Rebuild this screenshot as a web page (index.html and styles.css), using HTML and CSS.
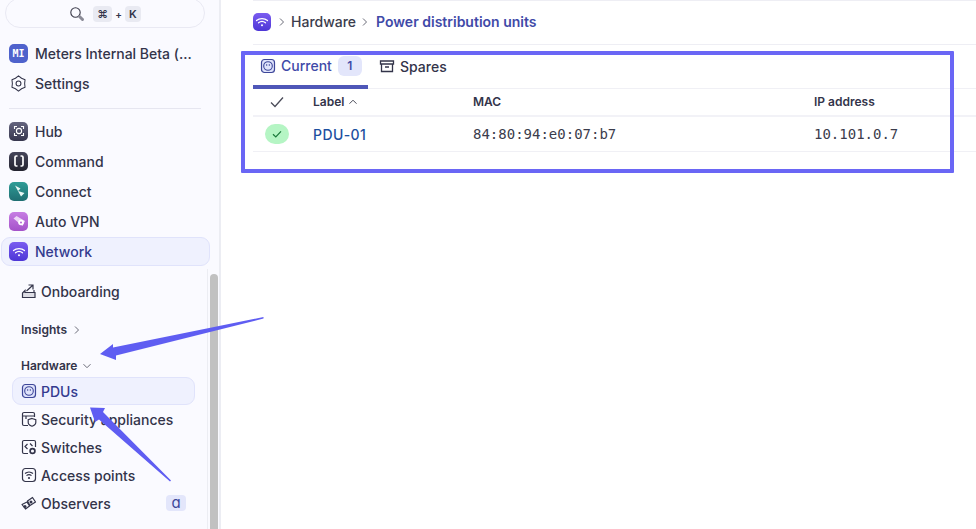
FILE: index.html
```html
<!DOCTYPE html>
<html lang="en">
<head>
    <meta charset="UTF-8">
    <title>Power distribution units</title>
    <link rel="stylesheet" href="styles.css">
</head>
<body>
    <aside class="sidebar">
        <div class="search">
            <svg class="search-icon" viewBox="0 0 16 16" width="16" height="16"><circle cx="6.5" cy="6.5" r="4.7" fill="none" stroke="#3a3a4a" stroke-width="1.1"/><path d="M10.500 10.500l3 3" stroke="#8a8a96" stroke-width="3" stroke-linecap="round"/></svg>
            <span class="key key-cmd">⌘</span><span class="plus">+</span><span class="key">K</span>
        </div>

        <div class="nav-item">
            <span class="app-icon app-mi">MI</span>
            <span>Meters Internal Beta (...</span>
        </div>
        <div class="nav-item">
            <svg class="app-icon" viewBox="0 0 18 18"><path d="M9 1.800L11.900 4l3.300 1.400L14.800 9l.4 3.600-3.300 1.400L9 16.200 6.100 14l-3.300-1.400L3.200 9l-.4-3.600L6.100 4z" fill="none" stroke="#33344a" stroke-width="1" stroke-linejoin="round"/><circle cx="9" cy="9" r="2.300" fill="none" stroke="#33344a" stroke-width="1"/></svg>
            <span>Settings</span>
        </div>
        <div class="divider"></div>
        <div class="nav-item">
            <span class="app-icon app-hub"><svg viewBox="0 0 18 18" width="18" height="18"><circle cx="9" cy="9" r="2.600" fill="none" stroke="#fff" stroke-width="1.100"/><path d="M4.500 7V4.500H7M11 4.500h2.500V7M13.500 11v2.500H11M7 13.500H4.500V11" fill="none" stroke="#fff" stroke-width="1.100"/></svg></span>
            <span>Hub</span>
        </div>
        <div class="nav-item">
            <span class="app-icon app-command"><svg viewBox="0 0 18 18" width="18" height="18"><path d="M7.500 4H6.200C5.400 4 5 4.500 5 5.200v7.600c0 .7.400 1.200 1.200 1.200h1.300M10.500 4h1.300c.8 0 1.200.5 1.200 1.200v7.600c0 .7-.4 1.200-1.200 1.200h-1.300" fill="none" stroke="#fff" stroke-width="1.700"/></svg></span>
            <span>Command</span>
        </div>
        <div class="nav-item">
            <span class="app-icon app-connect"><svg viewBox="0 0 18 18" width="18" height="18"><path d="M5 3.500l5.500 3-2.500 2.500zM8 9l6.500 2-3.500 3.500z" fill="#eaf7f5"/></svg></span>
            <span>Connect</span>
        </div>
        <div class="nav-item">
            <span class="app-icon app-vpn"><svg viewBox="0 0 18 18" width="18" height="18"><path d="M3.500 6.500L6.500 4l8.500 5-2.500 5z" fill="#edd6f7"/><circle cx="11" cy="10.500" r="2.800" fill="#fff"/><circle cx="11" cy="10.500" r="1" fill="#b563d6"/></svg></span>
            <span>Auto VPN</span>
        </div>
        <div class="nav-item nav-active">
            <span class="app-icon app-network"><svg viewBox="0 0 18 18" width="18" height="18"><path d="M3.500 7.500c3-2.600 8-2.600 11 0M5.500 9.800c2-1.600 5-1.600 7 0" fill="none" stroke="#fff" stroke-width="1.200" stroke-linecap="round"/><circle cx="9" cy="12.200" r="1" fill="#fff"/></svg></span>
            <span>Network</span>
        </div>

        <div class="sub-area">
            <div class="sub-list">
                <div class="sub-item onboarding">
                    <svg class="sub-icon" viewBox="0 0 16 16"><path d="M1.500 14.500V10l2.500-2.500v2h10v5z" fill="#dcdce4" stroke="#33344a" stroke-width="1.200"/><path d="M5.500 8L11.500 2.500M7.500 2h4.500v4.500M13 7v2.500" fill="none" stroke="#33344a" stroke-width="1.200"/></svg>
                    <span>Onboarding</span>
                </div>
                <div class="sub-heading insights">
                    <span>Insights</span>
                    <svg viewBox="0 0 10 10" width="10" height="10"><path d="M3 1.500l3.500 3.500L3 8.500" fill="none" stroke="#6a6b78" stroke-width="1"/></svg>
                </div>
                <div class="sub-heading hardware">
                    <span>Hardware</span>
                    <svg viewBox="0 0 10 10" width="10" height="10"><path d="M1.500 3.200L5 6.700l3.500-3.500" fill="none" stroke="#6a6b78" stroke-width="1"/></svg>
                </div>
                <div class="sub-item sub-active">
                    <svg class="sub-icon" viewBox="0 0 16 16"><rect x="1.500" y="1.500" width="13" height="13" rx="3" fill="#dfe3fb" stroke="#3d4699" stroke-width="1.200"/><circle cx="8" cy="8" r="4.300" fill="none" stroke="#3d4699" stroke-width="1.100"/><path d="M6.700 6.200v1.600M9.300 6.200v1.600" stroke="#3d4699" stroke-width="1"/></svg>
                    <span>PDUs</span>
                </div>
                <div class="sub-item">
                    <svg class="sub-icon" viewBox="0 0 16 16"><path d="M7 14.500H3A1.500 1.500 0 0 1 1.500 13V3A1.500 1.500 0 0 1 3 1.500h9A1.500 1.500 0 0 1 13.500 3v3M1.500 5h12M5 5v3" fill="none" stroke="#33344a" stroke-width="1.200"/><path d="M11 7.500l3.800 1.200v2.800c0 1.800-1.700 3-3.800 3.700-2.100-.7-3.800-1.900-3.800-3.700V8.700z" fill="#fafaff" stroke="#33344a" stroke-width="1.200"/></svg>
                    <span>Security appliances</span>
                </div>
                <div class="sub-item">
                    <svg class="sub-icon" viewBox="0 0 16 16"><path d="M7 14.500H3A1.500 1.500 0 0 1 1.500 13V3A1.500 1.500 0 0 1 3 1.500h10A1.500 1.500 0 0 1 14.500 3v5" fill="none" stroke="#33344a" stroke-width="1.200"/><path d="M6.500 5L4 7.500 6.500 10M9 4.500l2.500 2.500" fill="none" stroke="#33344a" stroke-width="1.200"/><circle cx="11.500" cy="12" r="2.400" fill="none" stroke="#33344a" stroke-width="1.700"/></svg>
                    <span>Switches</span>
                </div>
                <div class="sub-item">
                    <svg class="sub-icon" viewBox="0 0 16 16"><rect x="1.500" y="1.500" width="13" height="13" rx="3" fill="none" stroke="#33344a" stroke-width="1.200"/><path d="M4 6.500c2.300-2 5.700-2 8 0M5.500 8.600c1.500-1.200 3.500-1.200 5 0" fill="none" stroke="#33344a" stroke-width="1.200"/><circle cx="8" cy="11" r="1.100" fill="#33344a"/></svg>
                    <span>Access points</span>
                </div>
                <div class="sub-item">
                    <svg class="sub-icon" viewBox="0 0 16 16"><path d="M1 9.500l5-2.500 2.500 4-4 3zM6.500 6l5-3.500 3 4.500-5.500 3.500z" fill="none" stroke="#33344a" stroke-width="1.200" stroke-linejoin="round"/><circle cx="4" cy="11.500" r="1.500" fill="#33344a"/><circle cx="10" cy="7" r="1.500" fill="#33344a"/></svg>
                    <span>Observers</span>
                    <span class="alpha">ɑ</span>
                </div>
            </div>
            <div class="scroll-track"><div class="scroll-thumb"></div></div>
        </div>
    </aside>

    <main class="content">
        <header class="crumbs">
            <span class="crumb-icon"><svg viewBox="0 0 18 18" width="18" height="18"><path d="M3.500 7.500c3-2.600 8-2.600 11 0M5.500 9.800c2-1.600 5-1.600 7 0" fill="none" stroke="#fff" stroke-width="1.200" stroke-linecap="round"/><circle cx="9" cy="12.200" r="1" fill="#fff"/></svg></span>
            <svg viewBox="0 0 10 10" width="10" height="10"><path d="M3 1.500l3.500 3.500L3 8.500" fill="none" stroke="#6a6b78" stroke-width="1"/></svg>
            <span class="crumb">Hardware</span>
            <svg viewBox="0 0 10 10" width="10" height="10"><path d="M3 1.500l3.500 3.500L3 8.500" fill="none" stroke="#6a6b78" stroke-width="1"/></svg>
            <span class="crumb crumb-current">Power distribution units</span>
        </header>

        <nav class="tabs">
            <div class="tab tab-active">
                <svg viewBox="0 0 16 16" width="16" height="16"><rect x="1.500" y="1.500" width="13" height="13" rx="3" fill="#dfe3fb" stroke="#3d4699" stroke-width="1.200"/><circle cx="8" cy="8" r="4.300" fill="none" stroke="#3d4699" stroke-width="1.100"/><path d="M6.700 6.200v1.600M9.300 6.200v1.600" stroke="#3d4699" stroke-width="1"/></svg>
                <span>Current</span>
                <span class="count">1</span>
            </div>
            <div class="tab">
                <svg viewBox="0 0 16 16" width="16" height="16"><path d="M1.500 3h13v3h-13zM2.500 6v7.500h11V6" fill="none" stroke="#33344a" stroke-width="1.300"/><path d="M6 9h4" stroke="#33344a" stroke-width="1.500"/></svg>
                <span>Spares</span>
            </div>
        </nav>

        <div class="table">
            <div class="row row-head">
                <div class="cell-check"><svg viewBox="0 0 16 16" width="16" height="16"><path d="M2 8.500l4 4 8-9" fill="none" stroke="#4a4b58" stroke-width="1.300"/></svg></div>
                <div class="cell-label">Label <svg viewBox="0 0 10 10" width="10" height="10"><path d="M1.500 6.700L5 3.200l3.500 3.500" fill="none" stroke="#4a4b58" stroke-width="1"/></svg></div>
                <div class="cell-mac">MAC</div>
                <div class="cell-ip">IP address</div>
            </div>
            <div class="row row-body">
                <div class="cell-check"><span class="status"><svg viewBox="0 0 12 12" width="12" height="12"><path d="M2 6.300l2.800 2.700L10 3.300" fill="none" stroke="#1a7a3a" stroke-width="1.200"/></svg></span></div>
                <div class="cell-label device-link">PDU-01</div>
                <div class="cell-mac mono">84:80:94:e0:07:b7</div>
                <div class="cell-ip mono">10.101.0.7</div>
            </div>
        </div>
    </main>

    <!-- annotations on top of the screenshot -->
    <div class="callout"></div>
    <svg class="arrows" viewBox="0 0 976 529" width="976" height="529">
        <polygon points="263.500,317 113,347.500 113,344 100,354 116,360 116,355.500 263.500,318.500" fill="#5f5df2"/>
        <polygon points="171,480.500 103,412 105,408 90,407.500 95,422 99,419.500 170,481.500" fill="#5f5df2"/>
    </svg>
</body>
</html>
```

FILE: styles.css
```css
* {
    box-sizing: border-box;
}

body {
    margin: 0;
    width: 976px;
    height: 529px;
    overflow: hidden;
    display: flex;
    position: relative;
    font-family: "Inter", sans-serif;
    font-size: 14px;
    font-weight: 500;
    color: #33344a;
    background: #fff;
}

/* Sidebar */
.sidebar {
    width: 221px;
    height: 529px;
    flex: none;
    display: flex;
    flex-direction: column;
    background: #fafaff;
    border-right: 2px solid #ecedf3;
}

.search {
    height: 30px;
    margin: -2px 14px 10px 5px;
    border: 1px solid #e9e9f3;
    border-radius: 15px;
    display: flex;
    align-items: center;
    justify-content: center;
    gap: 3px;
    padding-top: 2px;
    font-size: 11px;
    font-weight: 600;
}

.search-icon {
    margin-right: 5px;
}

.key {
    height: 16px;
    min-width: 16px;
    padding: 0 3px;
    border-radius: 4px;
    background: #e9eaf2;
    display: flex;
    align-items: center;
    justify-content: center;
}

.key-cmd {
    min-width: 19px;
}

.plus {
    font-size: 10px;
}

.nav-item {
    height: 30px;
    margin-right: 8px;
    padding-left: 9px;
    display: flex;
    align-items: center;
    gap: 7px;
    white-space: nowrap;
}

.app-icon {
    width: 19px;
    height: 19px;
    flex: none;
    border-radius: 5px;
    display: flex;
    align-items: center;
    justify-content: center;
}

.app-mi {
    background: #4f62cc;
    color: #fff;
    font-family: "DejaVu Sans Mono", monospace;
    font-size: 10px;
    font-weight: 700;
}

.app-hub {
    background: linear-gradient(#65657f, #36364e);
}

.app-command {
    background: linear-gradient(#45455a, #23232f);
}

.app-connect {
    background: linear-gradient(#2f9c97, #1f6e72);
}

.app-vpn {
    background: linear-gradient(#c67de3, #a452c9);
}

.app-network {
    background: linear-gradient(#7a5cf0, #4d36d6);
}

.divider {
    height: 1px;
    margin: 10px 18px 7px 9px;
    background: #e6e6f0;
}

.nav-active {
    margin: 1px 9px 0 1px;
    padding-left: 7px;
    height: 29px;
    border: 1px solid #e0e3fb;
    border-radius: 9px;
    background: #eff1fe;
    color: #343b8f;
}

/* Scrolled part of the sidebar */
.sub-area {
    flex: 1;
    min-height: 0;
    display: flex;
    margin-top: 3px;
}

.sub-list {
    flex: 1;
    padding: 8px 12px 0 12px;
}

.sub-item {
    height: 28px;
    padding-left: 9px;
    display: flex;
    align-items: center;
    gap: 4px;
    white-space: nowrap;
}

.sub-icon {
    width: 16px;
    height: 16px;
    flex: none;
}

.sub-heading {
    padding-left: 9px;
    display: flex;
    align-items: center;
    gap: 5px;
    font-size: 12px;
    font-weight: 600;
    line-height: 16px;
}

.insights {
    margin-top: 17px;
}

.hardware {
    margin-top: 20px;
    margin-bottom: 3px;
}

.sub-active {
    border: 1px solid #e0e3fb;
    border-radius: 9px;
    background: #eff1fe;
    color: #343b8f;
    padding-left: 8px;
}

.alpha {
    margin-left: auto;
    margin-right: 9px;
    width: 20px;
    height: 16px;
    border-radius: 4px;
    background: #e3e6fb;
    color: #3d4699;
    font-size: 15px;
    font-weight: 400;
    line-height: 15px;
    text-align: center;
}

.scroll-track {
    width: 12px;
    flex: none;
    border-left: 1px solid #ecedf3;
    padding: 5px 1px 0 2px;
}

.scroll-thumb {
    height: 100%;
    background: #c1c1c1;
    border-radius: 4px 4px 0 0;
}

/* Main */
.content {
    flex: 1;
    min-width: 0;
    padding-left: 32px;
}

.crumbs {
    height: 45px;
    padding-bottom: 2px;
    border-top: 1px solid #eeeef4;
    border-bottom: 1px solid #eeeef4;
    display: flex;
    align-items: center;
    gap: 4px;
}

.crumb-icon {
    width: 18px;
    height: 18px;
    margin-right: 2px;
    border-radius: 5px;
    background: linear-gradient(#7a5cf0, #4d36d6);
}

.crumb {
    color: #3b3c4c;
}

.crumb-current {
    margin-left: 2px;
    color: #3f4aa8;
    font-weight: 600;
}

.tabs {
    height: 44px;
    display: flex;
    border-bottom: 1px solid #f0f0f5;
}

.tab {
    height: 43px;
    padding: 0 0 1px 11px;
    display: flex;
    align-items: center;
    gap: 5px;
}

.tab-active {
    width: 115px;
    height: 44px;
    margin-bottom: -1px;
    padding: 1px 0 0 7px;
    color: #3f4aa8;
    border-bottom: 4px solid #4f57b8;
    border-radius: 8px 8px 0 0;
}

.count {
    margin-left: 1px;
    width: 24px;
    height: 20px;
    border-radius: 6px;
    background: #e3e6fb;
    font-size: 12px;
    font-weight: 600;
    line-height: 20px;
    text-align: center;
}

.row {
    display: flex;
    align-items: center;
}

.row-head {
    height: 28px;
    padding-bottom: 2px;
    border-bottom: 2px solid #f2f2f7;
    font-size: 12px;
    font-weight: 600;
}

.row-body {
    height: 35px;
    border-bottom: 1px solid #f0f0f5;
}

.cell-check {
    width: 60px;
    padding-left: 12px;
    display: flex;
}

.row-head .cell-check {
    padding-left: 16px;
}

.row-head .cell-check svg {
    margin-top: 2px;
}

.cell-label {
    width: 160px;
}

.cell-label svg {
    vertical-align: -1px;
    margin-left: 1px;
}

.cell-mac {
    width: 341px;
}

.status {
    width: 24px;
    height: 20px;
    border-radius: 10px;
    background: #b5f5c4;
    display: flex;
    align-items: center;
    justify-content: center;
}

.device-link {
    color: #1c4fa0;
    letter-spacing: 0.4px;
}

.mono {
    font-family: "DejaVu Sans Mono", monospace;
    font-weight: 400;
    font-size: 14px;
    color: #3b3c4c;
}

/* Annotations */
.callout {
    position: absolute;
    left: 241px;
    top: 51px;
    width: 713px;
    height: 122px;
    border: 4px solid #6a66f5;
    border-radius: 1px;
}

.arrows {
    position: absolute;
    left: 0;
    top: 0;
    pointer-events: none;
}
```
